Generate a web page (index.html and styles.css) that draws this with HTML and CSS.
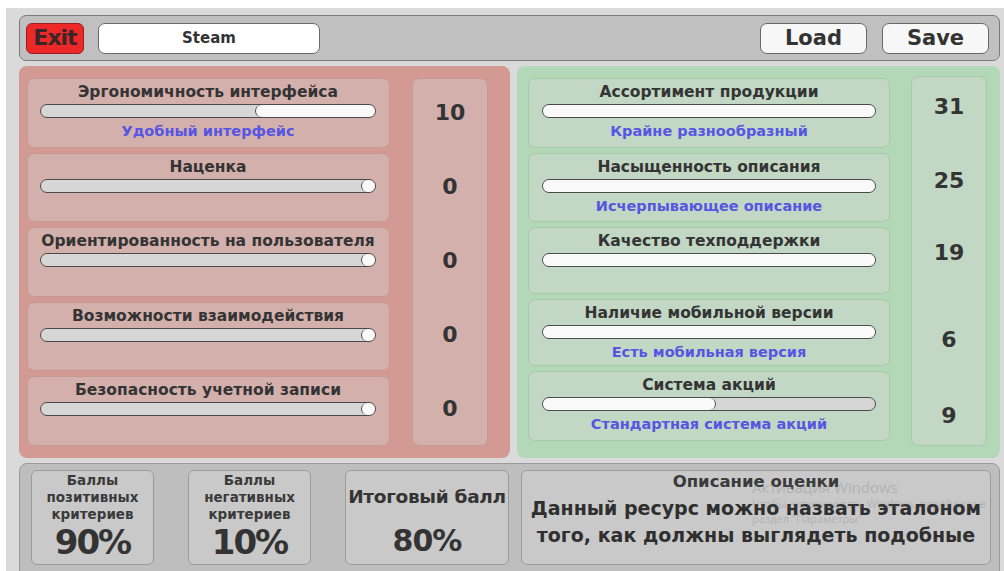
FILE: index.html
```html
<!DOCTYPE html>
<html lang="ru">
<head>
<meta charset="utf-8">
<title>Steam — оценка ресурса</title>
<link rel="stylesheet" href="styles.css">
</head>
<body>
<div class="app">
  <header class="topbar">
    <button class="btn exit">Exit</button>
    <div class="name-field">Steam</div>
    <div class="spacer"></div>
    <button class="btn file">Load</button>
    <button class="btn file">Save</button>
  </header>

  <main class="panels">
    <section class="panel neg">
      <div class="cards">
        <div class="card">
          <div class="crit-title">Эргономичность интерфейса</div>
          <div class="track"><div class="fill" style="width:36%"></div></div>
          <div class="crit-note">Удобный интерфейс</div>
        </div>
        <div class="card">
          <div class="crit-title">Наценка</div>
          <div class="track"><div class="fill" style="width:14px"></div></div>
        </div>
        <div class="card">
          <div class="crit-title">Ориентированность на пользователя</div>
          <div class="track"><div class="fill" style="width:14px"></div></div>
        </div>
        <div class="card">
          <div class="crit-title">Возможности взаимодействия</div>
          <div class="track"><div class="fill" style="width:14px"></div></div>
        </div>
        <div class="card">
          <div class="crit-title">Безопасность учетной записи</div>
          <div class="track"><div class="fill" style="width:14px"></div></div>
        </div>
      </div>
      <div class="scores">
        <div class="score">10</div>
        <div class="score">0</div>
        <div class="score">0</div>
        <div class="score">0</div>
        <div class="score">0</div>
      </div>
    </section>

    <section class="panel pos">
      <div class="cards">
        <div class="card">
          <div class="crit-title">Ассортимент продукции</div>
          <div class="track"><div class="fill" style="width:100%"></div></div>
          <div class="crit-note">Крайне разнообразный</div>
        </div>
        <div class="card">
          <div class="crit-title">Насыщенность описания</div>
          <div class="track"><div class="fill" style="width:100%"></div></div>
          <div class="crit-note">Исчерпывающее описание</div>
        </div>
        <div class="card">
          <div class="crit-title">Качество техподдержки</div>
          <div class="track"><div class="fill" style="width:100%"></div></div>
        </div>
        <div class="card">
          <div class="crit-title">Наличие мобильной версии</div>
          <div class="track"><div class="fill" style="width:100%"></div></div>
          <div class="crit-note">Есть мобильная версия</div>
        </div>
        <div class="card">
          <div class="crit-title">Система акций</div>
          <div class="track"><div class="fill part" style="width:52%"></div></div>
          <div class="crit-note">Стандартная система акций</div>
        </div>
      </div>
      <div class="scores">
        <div class="score">31</div>
        <div class="score">25</div>
        <div class="score">19</div>
        <div class="score">6</div>
        <div class="score">9</div>
      </div>
    </section>
  </main>

  <footer class="summary">
    <div class="stat">
      <div class="stat-label">Баллы<br>позитивных<br>критериев</div>
      <div class="stat-value">90%</div>
    </div>
    <div class="stat">
      <div class="stat-label">Баллы<br>негативных<br>критериев</div>
      <div class="stat-value">10%</div>
    </div>
    <div class="stat total">
      <div class="total-label">Итоговый балл</div>
      <div class="total-value">80%</div>
    </div>
    <div class="stat desc">
      <div class="desc-label">Описание оценки</div>
      <div class="desc-text">
        <span class="desc-line">Данный ресурс можно назвать эталоном</span>
        <span class="desc-line">того, как должны выглядеть подобные</span>
      </div>
    </div>
  </footer>

  <div class="activation">
    <div class="act-title">Активация Windows</div>
    <div class="act-hint">Чтобы активировать Windows, перейдите в</div>
    <div class="act-hint">раздел "Параметры".</div>
  </div>
</div>
</body>
</html>
```

FILE: styles.css
```css
* {
  box-sizing: border-box;
}

html, body {
  margin: 0;
  padding: 0;
  background: #ffffff;
}

body {
  font-family: "DejaVu Sans", "Liberation Sans", sans-serif;
  font-weight: bold;
  color: #343434;
  overflow: hidden;
}

.app {
  position: relative;
  margin: 8px 0 0 6px;
  height: 563px;
  padding: 7px 4px 0 13px;
  background: #dadada;
  display: flex;
  flex-direction: column;
  gap: 5px;
  overflow: hidden;
}

/* ---------- top bar ---------- */

.topbar {
  height: 46px;
  flex: none;
  display: flex;
  align-items: center;
  padding: 0 10px 0 6px;
  background: #c0c0c0;
  border: 1.5px solid #7a7a7a;
  border-radius: 7px;
}

.btn {
  font-family: inherit;
  font-weight: bold;
  color: #333;
  padding: 0;
  height: 31px;
  cursor: pointer;
}

.exit {
  width: 58px;
  font-size: 22px;
  line-height: 28px;
  background: #ec2828;
  border: 1.5px solid #9c1d1d;
  border-radius: 6px;
  color: #3a2626;
  letter-spacing: -1px;
}

.name-field {
  width: 222px;
  height: 31px;
  margin-left: 14px;
  background: #ffffff;
  border: 1.5px solid #6a6a6a;
  border-radius: 7px;
  font-size: 15px;
  line-height: 28px;
  text-align: center;
}

.spacer {
  flex: 1;
}

.file {
  width: 107px;
  font-size: 21px;
  line-height: 28px;
  background: #f7f7f7;
  border: 1.5px solid #686868;
  border-radius: 7px;
}

.file + .file {
  margin-left: 15px;
}

/* ---------- criteria panels ---------- */

.panels {
  height: 392px;
  flex: none;
  display: flex;
  gap: 7px;
}

.panel {
  display: flex;
  border-radius: 8px;
  padding-top: 12px;
}

.neg {
  width: 491px;
  padding-left: 8px;
  gap: 22px;
  background: #d39a94;
}

.pos {
  width: 483px;
  padding-left: 11px;
  gap: 21px;
  background: #b3d8b7;
}

.cards {
  display: grid;
  gap: 5px;
  align-content: start;
}

.neg .cards {
  width: 363px;
  grid-template-rows: repeat(5, 69.6px);
}

.pos .cards {
  width: 362px;
  grid-template-rows: 70px 69px 67px 67px 70px;
}

.card {
  border-radius: 7px;
  padding: 3px 13px 0 12px;
  text-align: center;
}

.neg .card {
  background: #d4b0ac;
  border: 1px solid #c59892;
}

.pos .card {
  background: #c2d7c4;
  border: 1px solid #a8c8ac;
  padding-left: 13px;
}

.crit-title {
  font-size: 15.5px;
  line-height: 20px;
  white-space: nowrap;
}

.crit-note {
  margin-top: 3px;
  font-size: 14.5px;
  line-height: 20px;
  color: #5656e2;
  white-space: nowrap;
}

.track {
  height: 14px;
  margin-top: 2px;
  display: flex;
  border: 1.5px solid #4a4a4a;
  border-radius: 8px;
  background: #d6d6d6;
  overflow: hidden;
}

.neg .track {
  justify-content: flex-end;
}

.fill {
  height: 100%;
  background: #f9f9f9;
  border-radius: 7px;
}

.neg .fill {
  border-left: 1.5px solid #4f4f4f;
}

.pos .fill.part {
  border-right: 1.5px solid #4f4f4f;
}

.scores {
  width: 76px;
  border-radius: 7px;
  display: flex;
  flex-direction: column;
  font-size: 22px;
  line-height: 24px;
  text-align: center;
}

.neg .scores {
  height: 368px;
  background: #d4b0ac;
  border: 1px solid #c59892;
  padding-top: 22px;
}

.neg .score + .score {
  margin-top: 50px;
}

.pos .scores {
  height: 370px;
  margin-top: -2px;
  background: #c2d7c4;
  border: 1px solid #a8c8ac;
}

.pos .score:nth-child(1) { margin-top: 18px; }
.pos .score:nth-child(2) { margin-top: 50px; }
.pos .score:nth-child(3) { margin-top: 48px; }
.pos .score:nth-child(4) { margin-top: 63px; }
.pos .score:nth-child(5) { margin-top: 52px; }

/* ---------- summary ---------- */

.summary {
  height: 118px;
  flex: none;
  display: flex;
  padding: 6px 8px 0 11px;
  background: #bebebe;
  border: 1.5px solid #9a9a9a;
  border-radius: 8px;
}

.stat {
  flex: none;
  width: 123px;
  height: 95px;
  background: #c9c9c9;
  border: 1px solid #9b9b9b;
  border-radius: 6px;
  text-align: center;
  overflow: hidden;
}

.stat + .stat {
  margin-left: 34px;
}

.stat-label {
  padding-top: 1px;
  font-size: 13.5px;
  line-height: 17px;
  color: #3a3a3a;
}

.stat-value {
  font-size: 34px;
  line-height: 38px;
  letter-spacing: -2px;
  color: #333;
}

.stat.total {
  width: 164px;
}

.total-label {
  padding-top: 15px;
  font-size: 18.5px;
  line-height: 22px;
  white-space: nowrap;
  letter-spacing: -0.3px;
}

.total-value {
  margin-top: 14px;
  font-size: 30px;
  line-height: 38px;
  letter-spacing: -1px;
}

.stat.desc {
  width: 470px;
  margin-left: 12px;
}

.desc-label {
  padding-top: 1px;
  font-size: 16.5px;
  line-height: 20px;
  color: #3a3a3a;
}

.desc-text {
  margin-top: 3px;
  font-size: 19px;
  line-height: 27px;
  color: #2f2f2f;
}

.desc-line {
  display: block;
  white-space: nowrap;
}

/* ---------- OS activation watermark ---------- */

.activation {
  position: absolute;
  left: 746px;
  top: 470px;
  font-family: "Open Sans", "DejaVu Sans", sans-serif;
  font-weight: normal;
  color: rgba(120, 120, 120, 0.3);
  pointer-events: none;
}

.act-title {
  font-size: 15px;
  line-height: 18px;
}

.act-hint {
  font-size: 11px;
  line-height: 15px;
}
```
